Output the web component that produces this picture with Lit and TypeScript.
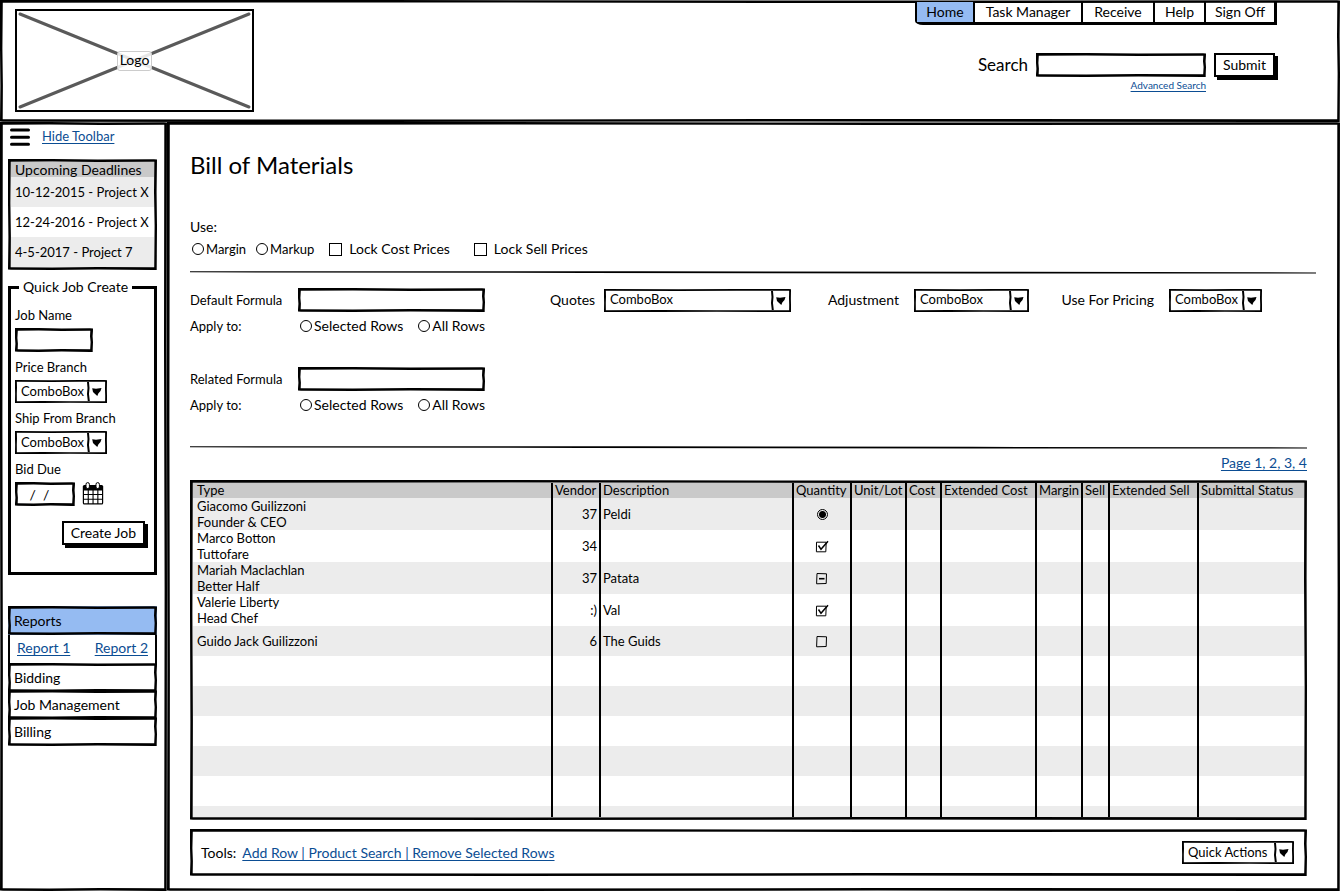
import { LitElement, html, css, nothing, unsafeCSS } from "lit";
import { customElement } from "lit/decorators.js";
import { classMap } from "lit/directives/class-map.js";

const svgUrl = (markup: string) =>
  unsafeCSS(`url("data:image/svg+xml,${encodeURIComponent(markup)}")`);

// Uneven hand-drawn frames, sliced at 3px and stretched along each edge.
const frame = svgUrl(
  `<svg xmlns="http://www.w3.org/2000/svg" width="100" height="100"><path fill-rule="evenodd" d="M0 0L30 0L60 .6L97 .2L100 .4L99.6 30L100 60L99.7 100L60 99.5L30 100L0 99.6L.4 70L0 40ZM2.8 2.8L2.4 40L2.9 70L2.7 97.3L30 97.6L60 97L97.2 97.3L97.6 60L97 30L97.3 2.8L60 3L30 2.4Z"/></svg>`
);
const thinFrame = svgUrl(
  `<svg xmlns="http://www.w3.org/2000/svg" width="100" height="100"><path fill-rule="evenodd" d="M0 0L40 .3L70 0L100 .2L99.8 40L100 70L100 100L60 99.8L30 100L0 100L.2 60L0 30ZM2.800 2.800L3 30L2.700 60L2.800 97.200L30 97L60 97.300L97.200 97.200L97.300 70L97 40L97.200 2.800L70 2.700L40 3Z"/></svg>`
);
const tick = svgUrl(
  `<svg xmlns="http://www.w3.org/2000/svg" width="14" height="13" fill="none" stroke="#000"><path d="M1.500 2.200H11.200L10.800 11.800H1.400Z"/><path stroke-width="1.500" d="M3.500 5.500L6 9.300L13 1.200"/></svg>`
);
const dash = svgUrl(
  `<svg xmlns="http://www.w3.org/2000/svg" width="14" height="13" fill="none" stroke="#000"><path d="M2 1.500L11.500 1.800L11.200 11.500L1.600 11.800Z"/><path stroke-width="1.600" d="M4 6.700H9.500"/></svg>`
);
const emptyBox = svgUrl(
  `<svg xmlns="http://www.w3.org/2000/svg" width="14" height="13" fill="none" stroke="#000"><path d="M2 1.500L11.500 1.800L11.200 11.500L1.600 11.800Z"/></svg>`
);

type Mark = "radio" | "checked" | "mixed" | "empty";
interface Row {
  lines: string[];
  vendor: string;
  description: string;
  mark: Mark;
}

const columns: [string, string][] = [
  ["Type", "c-type"],
  ["Vendor", "c-vendor"],
  ["Description", "c-desc"],
  ["Quantity", "c-qty"],
  ["Unit/Lot", "c-unit"],
  ["Cost", "c-cost"],
  ["Extended Cost", "c-extcost"],
  ["Margin", "c-margin"],
  ["Sell", "c-sell"],
  ["Extended Sell", "c-extsell"],
  ["Submittal Status", "c-status"],
];

const rows: Row[] = [
  { lines: ["Giacomo Guilizzoni", "Founder & CEO"], vendor: "37", description: "Peldi", mark: "radio" },
  { lines: ["Marco Botton", "Tuttofare"], vendor: "34", description: "", mark: "checked" },
  { lines: ["Mariah Maclachlan", "Better Half"], vendor: "37", description: "Patata", mark: "mixed" },
  { lines: ["Valerie Liberty", "Head Chef"], vendor: ":)", description: "Val", mark: "checked" },
  { lines: ["Guido Jack Guilizzoni"], vendor: "6", description: "The Guids", mark: "empty" },
];

@customElement("app-root")
export class AppRoot extends LitElement {
  static styles = css`
    :host {
      display: block;
      color: #000;
      background: #fff;
      font: 14px/16px Lato, "Liberation Sans", sans-serif;
    }
    * { box-sizing: border-box; }
    input, select, button {
      font: inherit;
      color: inherit;
      margin: 0;
      background: transparent;
      border-radius: 0;
    }
    a {
      color: #0b4d93;
      text-decoration: underline;
      text-decoration-skip-ink: none;
      text-underline-offset: 2px;
    }
    .page {
      display: grid;
      grid-template: 122px 1fr / 167px minmax(0, 1fr);
      min-height: 100vh;
    }
    .panel { border: 3px solid #000; border-image: ${frame} 3 stretch; }
    .header {
      grid-column: 1 / -1;
      display: flex;
      justify-content: space-between;
      padding: 6px 60px 0 12px;
    }
    .logo {
      display: grid;
      place-items: center;
      width: 239px;
      height: 103px;
      border: 2px solid #000;
    }
    .logo > * { grid-area: 1 / 1; }
    .logo svg { width: 100%; height: 100%; }
    .logo-name {
      padding: 0 2px 2px;
      border: 1px solid #ccc;
      border-radius: 3px;
      background: rgba(255, 255, 255, 0.85);
    }
    .header-side { display: flex; flex-direction: column; align-items: flex-end; }
    .nav {
      display: grid;
      grid-template-columns: 56px 108px 72px 51px 70px;
      height: 23px;
      margin-top: -7px;
      border: solid #000;
      border-width: 0 3px 3px 2px;
      border-bottom-left-radius: 8px 4px;
    }
    .nav a {
      color: #000;
      text-decoration: none;
      text-align: center;
      line-height: 20px;
      border-left: 2px solid #000;
    }
    .nav a:first-child { border-left: 0; }
    .nav .current { background: #95bbf2; }
    .search {
      display: grid;
      grid-template-columns: auto 170px auto;
      column-gap: 8px;
      align-items: center;
      justify-items: end;
      margin-top: 28px;
    }
    .search-label { font-size: 17px; }
    .box {
      width: 100%;
      height: 24px;
      padding: 0 8px;
      border: 3px solid #000;
      border-image: ${frame} 3 stretch;
      outline: 0;
    }
    .button {
      height: 24px;
      padding: 0 7px;
      border: 2px solid #000;
      background: #fff;
      box-shadow: 3px 3px 0 #000;
      line-height: 18px;
    }
    .search .button { margin-right: 2px; }
    .advanced { grid-column: 2; font-size: 10px; line-height: 16px; }

    .sidebar { padding: 3px 7px 8px 5px; }
    .toggle { display: flex; align-items: flex-start; gap: 12px; height: 20px; padding-left: 2px; }
    .toggle button { display: flex; padding: 0; border: 0; }
    .toggle a { font-size: 13px; }
    .deadlines { margin-top: 11px; overflow: hidden; }
    .deadlines h2 {
      margin: 0;
      padding: 0 4px;
      font: inherit;
      line-height: 15px;
      background: #c9c9c9;
    }
    .deadlines ul { margin: 0; padding: 0; list-style: none; }
    .deadlines li {
      padding: 0 4px;
      font-size: 13px;
      line-height: 30px;
      white-space: nowrap;
    }
    .deadlines li:nth-child(odd) { background: #ececec; }
    .job {
      display: flex;
      flex-direction: column;
      align-items: flex-start;
      margin: 9px 0 0;
      padding: 12px 4px 27px;
      min-width: 0;
      border: 3px solid #000;
    }
    .job legend { margin-left: 4px; padding: 0 4px; }
    .job label { margin: 0 0 5px; font-size: 13px; }
    .job .box, .job .combo { margin-bottom: 7px; }
    .job .name { width: 78px; }
    .job .combo { width: 92px; }
    .date { display: flex; gap: 7px; }
    .date .box { width: 60px; margin: 0; }
    .job .button { align-self: flex-end; margin: 15px 5px 0 0; }
    .accordion { margin-top: 31px; }
    .accordion button {
      display: block;
      width: 100%;
      height: 29px;
      padding: 0 3px;
      text-align: left;
      border: 3px solid #000;
      border-image: ${frame} 3 stretch;
    }
    .accordion button + button, .reports + button { margin-top: -2px; }
    .accordion .open { background: #95bbf2; }
    .reports {
      display: flex;
      justify-content: space-between;
      height: 30px;
      padding: 5px 7px 0;
      border: solid #000;
      border-width: 0 2px;
    }

    .combo {
      display: grid;
      height: 23px;
      border: 2px solid #000;
      border-image: ${thinFrame} 3 stretch;
    }
    .combo > * { grid-area: 1 / 1; }
    .combo select {
      width: 100%;
      padding: 0 18px 2px 4px;
      appearance: none;
      border: 0;
      outline: 0;
      font-size: 13px;
    }
    .combo svg { justify-self: end; pointer-events: none; }

    .main { display: flex; flex-direction: column; padding: 25px 30px 12px 20px; }
    h1 { margin: 0 0 39px; font-size: 24px; line-height: 30px; font-weight: 400; }
    .options { display: flex; align-items: center; height: 16px; margin-top: 6px; }
    .options label { display: flex; align-items: center; }
    .tight { gap: 2px; margin-left: 2px; font-size: 13px; }
    .tight + .tight { margin-left: 10px; }
    .check { gap: 7px; margin-left: 15px; }
    .check + .check { margin-left: 24px; }
    .radio, .tickbox {
      appearance: none;
      width: 12px;
      height: 12px;
      border: 1px solid #000;
    }
    .radio { border-radius: 50%; }
    .tickbox { width: 13px; height: 13px; }
    .rule { display: block; width: 100%; height: 3px; }
    .rule.first { width: calc(100% + 9px); margin: 14px 0; }
    .rule.second { margin-top: 33px; }
    .formula { display: grid; grid-template-columns: 108px 187px; row-gap: 6px; align-items: center; }
    .formula + .formula { margin-top: 33px; }
    .formula > label, .formula > span { font-size: 13px; }
    .apply { display: flex; justify-content: space-between; padding-left: 2px; }
    .apply label { display: flex; align-items: center; gap: 2px; }
    .filters { display: flex; justify-content: space-between; padding-right: 45px; }
    .pickers {
      display: grid;
      grid-template-columns: 54px minmax(93px, 1fr) 123px 115px 140px 93px;
      flex: 1;
      align-self: start;
      align-items: center;
      height: 24px;
      margin-left: 65px;
    }
    .after { justify-self: end; padding-right: 15px; }
    .pages { display: flex; justify-content: flex-end; margin: 6px 0 9px; }

    .grid { flex: 1 1 0; min-height: 220px; overflow: hidden; font-size: 13px; }
    table { width: 100%; table-layout: fixed; border-collapse: separate; border-spacing: 0; }
    th, td {
      padding: 0 2px;
      border-left: 2px solid #000;
      text-align: left;
      font-weight: 400;
      white-space: nowrap;
      overflow: hidden;
    }
    th { height: 15px; line-height: 15px; background: #c9c9c9; }
    td { height: 30px; }
    th:first-child, td:first-child { padding-left: 4px; border-left: 0; }
    tbody tr:nth-child(odd) { background: #ececec; }
    td.number { text-align: right; }
    .c-vendor { width: 48px; }
    .c-desc { width: 193px; }
    .c-qty { width: 58px; }
    .c-unit { width: 55px; }
    .c-cost { width: 35px; }
    .c-extcost { width: 95px; }
    .c-margin { width: 46px; }
    .c-sell { width: 27px; }
    .c-extsell { width: 89px; }
    .c-status { width: 107px; }
    .mark input {
      display: block;
      margin: 0 auto;
      appearance: none;
      width: 14px;
      height: 13px;
      background: ${emptyBox};
    }
    .mark input:checked { background: ${tick}; }
    .mark input:indeterminate { background: ${dash}; }
    .mark input[type="radio"] {
      width: 11px;
      height: 11px;
      border: 1px solid #000;
      border-radius: 50%;
      background: radial-gradient(circle, #000 3px, transparent 4px);
    }
    .tools {
      display: flex;
      align-items: center;
      height: 47px;
      margin-top: 9px;
      padding: 0 10px 0 8px;
    }
    .tools a { margin-left: 6px; }
    .tools .combo { width: 112px; margin-left: auto; }
  `;

  private combo(id: string, text: string, label?: string) {
    return html`<span class="combo">
      <select id=${id} aria-label=${label ?? nothing}><option>${text}</option></select>
      <svg width="18" height="19" viewBox="0 0 18 19" aria-hidden="true">
        <path d="M1 0L1.500 6L1 12L1.800 19" fill="none" stroke="#000" stroke-width="2" />
        <path d="M5.200 6.300L9 6.800L14.500 6L13.500 9L11.300 11.500L10.300 14L7.800 11.800L6 10Z" />
      </svg>
    </span>`;
  }

  private rule(kind: string) {
    return html`<svg class="rule ${kind}" viewBox="0 0 100 3" preserveAspectRatio="none" aria-hidden="true">
      <path d="M0 .2L40 .3L70 .8L100 1.400V2.600L70 2.500L35 2L0 1.300Z" />
    </svg>`;
  }

  private formula(name: string, key: string) {
    return html`<div class="formula">
      <label for=${key}>${name}</label>
      <input class="box" id=${key} type="text" />
      <span>Apply to:</span>
      <div class="apply">
        <label><input class="radio" type="radio" name="${key}-apply" />Selected Rows</label>
        <label><input class="radio" type="radio" name="${key}-apply" />All Rows</label>
      </div>
    </div>`;
  }

  private mark(row: Row) {
    const label = `Quantity, ${row.lines[0]}`;
    return row.mark === "radio"
      ? html`<input type="radio" name="quantity" aria-label=${label} checked />`
      : html`<input
          type="checkbox"
          aria-label=${label}
          .checked=${row.mark === "checked"}
          .indeterminate=${row.mark === "mixed"}
        />`;
  }

  render() {
    return html`<div class="page">
      <header class="header panel">
        <div class="logo">
          <svg viewBox="0 0 235 99" preserveAspectRatio="none" aria-hidden="true">
            <path d="M3 3L232 96M232 3L3 96" stroke="#5a5a5a" stroke-width="3" stroke-linecap="round" />
          </svg>
          <span class="logo-name">Logo</span>
        </div>
        <div class="header-side">
          <nav class="nav">
            ${["Home", "Task Manager", "Receive", "Help", "Sign Off"].map(
              (name, i) => html`<a href="#" class=${classMap({ current: i === 0 })}>${name}</a>`
            )}
          </nav>
          <form class="search">
            <label class="search-label" for="search">Search</label>
            <input class="box" id="search" type="text" />
            <button class="button" type="button">Submit</button>
            <a class="advanced" href="#">Advanced Search</a>
          </form>
        </div>
      </header>

      <aside class="sidebar panel">
        <div class="toggle">
          <button type="button" aria-label="Menu">
            <svg width="20" height="18" viewBox="0 0 20 18">
              <path d="M1.500 2H18.500M1.500 9.300H18.500M1.500 16.300H18.500" stroke="#000" stroke-width="3" stroke-linecap="round" />
            </svg>
          </button>
          <a href="#">Hide Toolbar</a>
        </div>
        <section class="deadlines panel">
          <h2>Upcoming Deadlines</h2>
          <ul>
            <li>10-12-2015 - Project X</li>
            <li>12-24-2016 - Project X</li>
            <li>4-5-2017 - Project 7</li>
          </ul>
        </section>
        <fieldset class="job">
          <legend>Quick Job Create</legend>
          <label for="job-name">Job Name</label>
          <input class="box name" id="job-name" type="text" />
          <label for="price-branch">Price Branch</label>
          ${this.combo("price-branch", "ComboBox")}
          <label for="ship-branch">Ship From Branch</label>
          ${this.combo("ship-branch", "ComboBox")}
          <label for="bid-due">Bid Due</label>
          <div class="date">
            <input class="box" id="bid-due" type="text" value=" /  /" />
            <svg width="22" height="24" viewBox="0 0 22 24" aria-hidden="true">
              <rect x=".8" y="3" width="20.400" height="19.500" rx="1.500" />
              <path fill="#fff" d="M2 8.500h3.700v3.500H2zM6.800 8.500h3.700v3.500H6.800zM11.600 8.500h3.700v3.500h-3.700zM16.400 8.500H20v3.500h-3.600zM2 13h3.700v3.700H2zM6.800 13h3.700v3.700H6.800zM11.600 13h3.700v3.700h-3.700zM16.400 13H20v3.700h-3.600zM2 17.700h3.700v3.600H2zM6.800 17.700h3.700v3.600H6.800zM11.600 17.700h3.700v3.600h-3.700zM16.400 17.700H20v3.600h-3.600z" />
              <rect x="4" y=".6" width="3.400" height="6" rx="1.700" fill="#fff" stroke="#000" />
              <rect x="14" y=".6" width="3.400" height="6" rx="1.700" fill="#fff" stroke="#000" />
            </svg>
          </div>
          <button class="button" type="button">Create Job</button>
        </fieldset>
        <nav class="accordion">
          <button class="open" type="button">Reports</button>
          <div class="reports"><a href="#">Report 1</a><a href="#">Report 2</a></div>
          <button type="button">Bidding</button>
          <button type="button">Job Management</button>
          <button type="button">Billing</button>
        </nav>
      </aside>

      <main class="main panel">
        <h1>Bill of Materials</h1>
        <div>Use:</div>
        <div class="options">
          <label class="tight"><input class="radio" type="radio" name="use" />Margin</label>
          <label class="tight"><input class="radio" type="radio" name="use" />Markup</label>
          <label class="check"><input class="tickbox" type="checkbox" />Lock Cost Prices</label>
          <label class="check"><input class="tickbox" type="checkbox" />Lock Sell Prices</label>
        </div>
        ${this.rule("first")}
        <div class="filters">
          <div>
            ${this.formula("Default Formula", "default-formula")}
            ${this.formula("Related Formula", "related-formula")}
          </div>
          <div class="pickers">
            <label for="quotes">Quotes</label>${this.combo("quotes", "ComboBox")}
            <label class="after" for="adjustment">Adjustment</label>${this.combo("adjustment", "ComboBox")}
            <label class="after" for="pricing">Use For Pricing</label>${this.combo("pricing", "ComboBox")}
          </div>
        </div>
        ${this.rule("second")}
        <div class="pages"><a href="#">Page 1, 2, 3, 4</a></div>
        <div class="grid panel">
          <table>
            <thead>
              <tr>${columns.map(([name, cls]) => html`<th class=${cls} scope="col">${name}</th>`)}</tr>
            </thead>
            <tbody>
              ${rows.map(
                (row) => html`<tr>
                  <td>${row.lines.map((line) => html`<div>${line}</div>`)}</td>
                  <td class="number">${row.vendor}</td>
                  <td>${row.description}</td>
                  <td class="mark">${this.mark(row)}</td>
                  ${columns.slice(4).map(() => html`<td></td>`)}
                </tr>`
              )}
              ${Array.from({ length: 6 }, () => html`<tr>${columns.map(() => html`<td></td>`)}</tr>`)}
            </tbody>
          </table>
        </div>
        <div class="tools panel">
          <span>Tools:</span>
          <a href="#">Add Row | Product Search | Remove Selected Rows</a>
          ${this.combo("quick-actions", "Quick Actions", "Quick Actions")}
        </div>
      </main>
    </div>`;
  }
}
